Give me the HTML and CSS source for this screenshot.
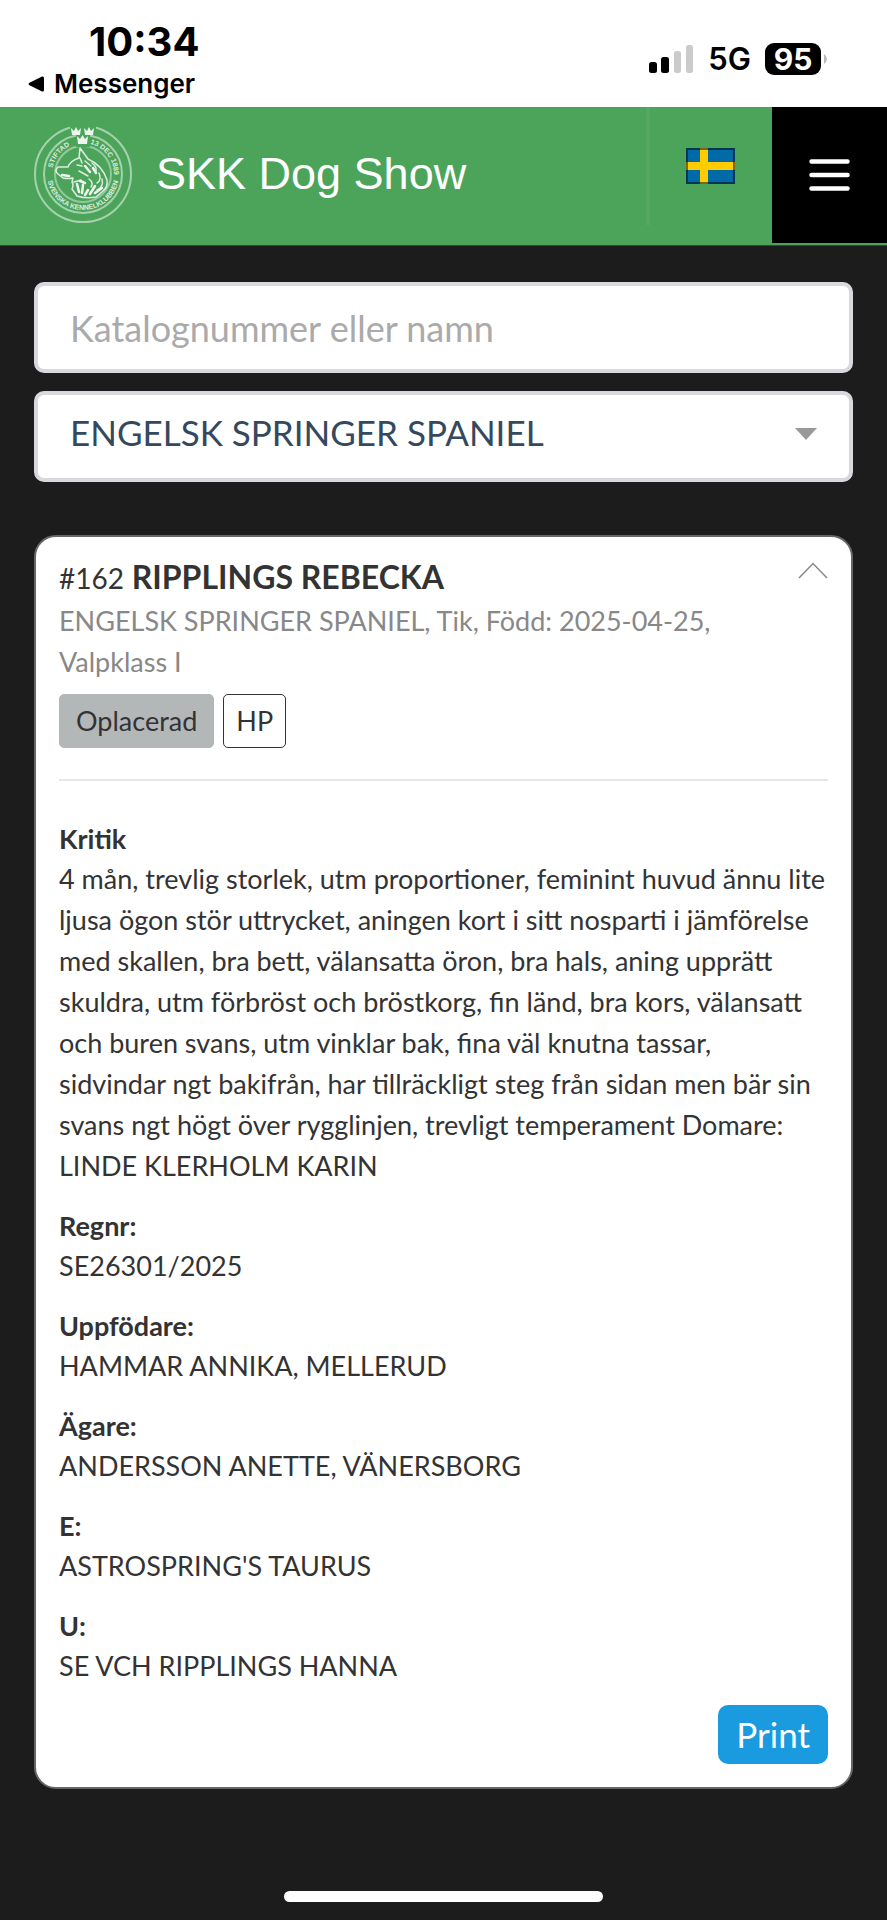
FILE: index.html
```html
<!DOCTYPE html>
<html lang="sv">
<head>
<meta charset="utf-8">
<meta name="viewport" content="width=device-width, initial-scale=1">
<title>SKK Dog Show</title>
<link rel="stylesheet" href="styles.css">
</head>
<body>
<div class="statusbar">
  <div class="status-left">
    <span class="clock">10:34</span>
    <a class="back" href="#">
      <svg width="17" height="16" viewBox="0 0 17 16" aria-hidden="true"><path d="M1 7 Q0 8 1 9 L14 15.500 Q16 16 16 14 V2 Q16 0 14 .5Z" fill="#000"/></svg>
      <span>Messenger</span>
    </a>
  </div>
  <div class="status-right">
    <svg width="45" height="28" viewBox="0 0 45 28" aria-hidden="true">
      <rect x="0" y="17" width="8" height="11" rx="2.500"/>
      <rect x="12" y="12" width="8" height="16" rx="2.500"/>
      <rect x="25" y="6" width="7" height="22" rx="2.500" fill="#cbcbcb"/>
      <rect x="37" y="0" width="7" height="28" rx="2.500" fill="#cbcbcb"/>
    </svg>
    <span class="network">5G</span>
    <span class="battery"><span class="level">95</span><svg width="6" height="10" viewBox="0 0 6 10" aria-hidden="true"><path d="M2 0 Q5 2 5 5 T2 10Z" fill="#bbb"/></svg></span>
  </div>
</div>

<header class="header">
  <a class="brand" href="#">
    <svg class="emblem" viewBox="0 0 98 98" aria-hidden="true">
      <defs>
        <path id="arc-top" d="M18 49 A31 31 0 0 1 80 49"/>
        <path id="arc-bottom" d="M13 49 A36 36 0 0 0 85 49"/>
      </defs>
      <g fill="none" stroke="#fff">
        <circle cx="49" cy="49" r="48" stroke-width="2" opacity=".5"/>
        <circle cx="49" cy="49" r="39" stroke-width="2" opacity=".5"/>
        <circle cx="49" cy="49" r="28" stroke-width="2" opacity=".4"/>
      </g>
      <path d="M36 -2 H62 V10 H56 V22 H42 V10 H36Z" fill="#4ba45a"/>
      <g fill="#fff" opacity=".8" class="seal-text">
        <text><textPath href="#arc-top" startOffset="6">STIFTAD</textPath></text>
        <text><textPath href="#arc-top" startOffset="56">13 DEC 1889</textPath></text>
        <text><textPath href="#arc-bottom" startOffset="50%" text-anchor="middle">SVENSKA KENNELKLUBBEN</textPath></text>
      </g>
      <g fill="#fff" opacity=".9">
        <path d="M37 3 l3 3 2-4 2 4 3-3 -1 7 h-8z"/>
        <path d="M50 3 l3 3 2-4 2 4 3-3 -1 7 h-8z"/>
        <path d="M43 11 l3 3 2.500-4 2.500 4 3-3 -1 8 h-9z"/>
      </g>
      <g fill="none" stroke="#fff" stroke-width="1.500" stroke-linecap="round" stroke-linejoin="round">
        <path opacity=".8" d="M45 33 L46 23 L54 34 Q68 40 73 55 Q74 62 69 66 L62 72 M45 33 Q36 36 34 42 L24 42 Q20 46 24 49 L29 53 Q34 54 39 53 L38 57 Q40 60 38 64 L43 71 Q52 74 62 72"/>
        <path opacity=".8" d="M43 40 l5 1 M45 46 l9 5 M51 36 l6 5 M58 38 q5 4 4 8 M65 48 q3 7-2 10 M55 54 q5 4 2 8 M40 57 l7-2 M68 54 q2 8-5 11 M46 33 l2 5"/>
        <path stroke-width="2.500" opacity=".9" d="M51 41 l5 6 M59 43 l3 5 M43 59 l2 8 M49 60 l-1 8 M54 65 l-3 5 M61 61 l-5 8 M68 63 l-7 5 M28 50 l7 1 M46 56 l5 2"/>
      </g>
    </svg>
    <span class="brand-name">SKK Dog Show</span>
  </a>
  <button class="language" type="button" aria-label="Svenska">
    <svg width="49" height="36" viewBox="0 0 49 36" aria-hidden="true">
      <rect width="49" height="36" fill="#006aa7"/>
      <path d="M14 0h8v36h-8zM0 14h49v8H0z" fill="#fc0"/>
      <rect x="1" y="1" width="47" height="34" fill="none" stroke="#000" stroke-opacity=".5" stroke-width="2"/>
    </svg>
  </button>
  <button class="menu" type="button" aria-label="Meny">
    <svg width="41" height="32" viewBox="0 0 41 32" aria-hidden="true"><path d="M2.500 2.500h36M2.500 16h36M2.500 29.500h36" stroke="#fff" stroke-width="4.500" stroke-linecap="round"/></svg>
  </button>
</header>

<main class="main">
  <form class="filters">
    <input class="field" type="text" placeholder="Katalognummer eller namn" aria-label="Katalognummer eller namn">
    <div class="select-wrap">
      <select class="field breed" aria-label="Ras"><option>ENGELSK SPRINGER SPANIEL</option></select>
      <svg class="caret" width="22" height="12" viewBox="0 0 22 12" aria-hidden="true"><path d="M0 0h22L11 12z" fill="#999"/></svg>
    </div>
  </form>

  <article class="card">
    <div class="card-head">
      <h2 class="title"><span class="number">#162</span> RIPPLINGS REBECKA</h2>
      <button class="collapse" type="button" aria-label="Dölj">
        <svg width="30" height="17" viewBox="0 0 30 17" aria-hidden="true"><path d="M1 16 15 1.500 29 16" fill="none" stroke="#888" stroke-width="1.500"/></svg>
      </button>
    </div>
    <p class="subtitle">ENGELSK SPRINGER SPANIEL, Tik, Född: 2025-04-25, Valpklass I</p>
    <div class="tags"><span class="tag tag-filled">Oplacerad</span><span class="tag">HP</span></div>
    <hr class="rule">
    <dl class="details">
      <div><dt>Kritik</dt><dd>4 mån, trevlig storlek, utm proportioner, feminint huvud ännu lite ljusa ögon stör uttrycket, aningen kort i sitt nosparti i jämförelse med skallen, bra bett, välansatta öron, bra hals, aning upprätt skuldra, utm förbröst och bröstkorg, fin länd, bra kors, välansatt och buren svans, utm vinklar bak, fina väl knutna tassar,<br>sidvindar ngt bakifrån, har tillräckligt steg från sidan men bär sin<br>svans ngt högt över rygglinjen, trevligt temperament Domare:<br>LINDE KLERHOLM KARIN</dd></div>
      <div><dt>Regnr:</dt><dd>SE26301/2025</dd></div>
      <div><dt>Uppfödare:</dt><dd>HAMMAR ANNIKA, MELLERUD</dd></div>
      <div><dt>Ägare:</dt><dd>ANDERSSON ANETTE, VÄNERSBORG</dd></div>
      <div><dt>E:</dt><dd>ASTROSPRING'S TAURUS</dd></div>
      <div><dt>U:</dt><dd>SE VCH RIPPLINGS HANNA</dd></div>
    </dl>
    <button class="print" type="button">Print</button>
  </article>
</main>
<div class="home-indicator"></div>
</body>
</html>
```
FILE: styles.css
```css
* { box-sizing: border-box; }
body {
  margin: 0;
  min-height: 100vh;
  display: flex;
  flex-direction: column;
  background: #1c1c1c;
  color: #333;
  font: 27px/41px Lato, "Open Sans", sans-serif;
}
button { font: inherit; border: 0; padding: 0; background: none; cursor: pointer; }
svg { display: block; flex: none; }

.statusbar {
  display: flex;
  justify-content: space-between;
  height: 107px;
  padding: 20px 59px 0 28px;
  background: #fff;
  color: #000;
  font-family: Inter, sans-serif;
}
.status-left { display: flex; flex-direction: column; }
.clock { padding-left: 61px; font-size: 40px; font-weight: 700; line-height: 44px; }
.back { display: flex; align-items: center; gap: 9px; color: #000; text-decoration: none; font-size: 26px; font-weight: 600; line-height: 40px; }
.status-right { display: flex; align-items: center; gap: 14px; height: 78px; }
.network { font-size: 31px; font-weight: 600; line-height: 32px; }
.battery { display: flex; align-items: center; gap: 1px; }
.level {
  width: 56px;
  height: 32px;
  border-radius: 9px;
  background: #000;
  color: #fff;
  font-size: 30px;
  font-weight: 700;
  line-height: 32px;
  text-align: center;
}

.header { display: flex; height: 139px; background: #4ba45a; border-bottom: 1px solid #26522d; }
.brand { display: flex; flex: 1; align-items: center; gap: 24px; padding: 0 0 5px 34px; color: #fff; text-decoration: none; }
.emblem { width: 98px; height: 98px; overflow: visible; }
.seal-text { font: 700 7px "Liberation Sans", sans-serif; }
.brand-name { font: 45px/56px "Liberation Sans", Arial, sans-serif; white-space: nowrap; }
.language { display: flex; width: 126px; height: 118px; padding: 0 0 0 36px; align-items: center; border-left: 4px solid #54a862; }
.menu { display: flex; width: 115px; height: 136px; align-items: center; justify-content: center; background: #000; }

.main { padding: 36px 34px 48px; }
.filters { display: grid; gap: 18px; margin-bottom: 53px; }
.field {
  display: block;
  width: 100%;
  height: 91px;
  padding: 0 32px;
  border: 4px solid #d8d9de;
  border-radius: 10px;
  background: #fff;
  color: #34495e;
  font: 36px/48px Lato, "Open Sans", sans-serif;
}
.field::placeholder { color: #aaa; opacity: 1; }
.breed { appearance: none; padding-bottom: 10px; font-size: 35px; }
.select-wrap { position: relative; }
.caret { position: absolute; right: 36px; top: 37px; pointer-events: none; }

.card { display: flex; flex-direction: column; padding: 18px 23px 23px; border: 2px solid #666; border-radius: 22px; background: #fff; }
.card-head { display: flex; justify-content: space-between; align-items: flex-start; }
.title { margin: 0; font-size: 32px; line-height: 43px; font-weight: 700; }
.number { font-size: 28px; font-weight: 400; }
.collapse { padding-top: 7px; }
.subtitle { margin: 0 60px 0 0; color: #888; }
.tags { display: flex; gap: 9px; margin-top: 12px; }
.tag { padding: 0 12px; border: 1px solid #333; border-radius: 5px; line-height: 52px; }
.tag-filled { padding: 0 16px; border-color: #b3b7b8; background: #b3b7b8; }
.rule { width: 100%; height: 2px; margin: 31px 0 39px; border: 0; background: #e6e6e6; }
.details { display: grid; gap: 21px; margin: 0; }
.details dt { line-height: 38px; font-weight: 700; }
.details dd { margin: 0; }
.print { align-self: flex-end; height: 59px; margin-top: 19px; padding: 0 18px; border-radius: 10px; background: #1a9be0; color: #fff; font-size: 35px; line-height: 59px; }

.home-indicator { width: 36%; height: 11px; margin: auto auto 18px; border-radius: 6px; background: #fff; }
```
